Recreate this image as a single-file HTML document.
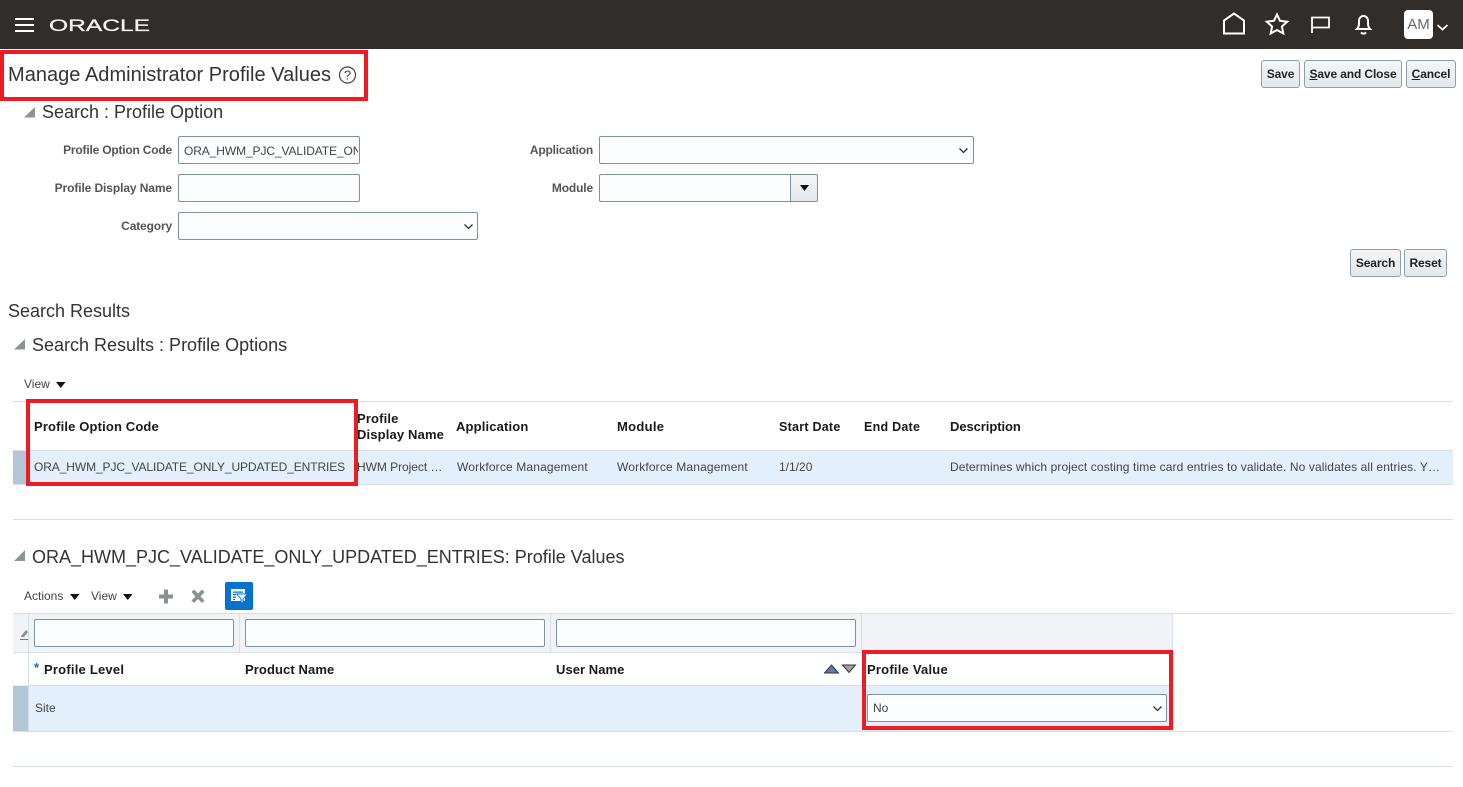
<!DOCTYPE html>
<html><head><meta charset="utf-8"><style>
html,body{margin:0;padding:0;background:#fff}
#p{position:relative;width:1463px;height:787px;overflow:hidden;font-family:"Liberation Sans",sans-serif;color:#333;background:#fff}
#p div,#p span.a,#p svg{position:absolute}
.t{position:absolute;white-space:nowrap;line-height:16px}
.h{font-size:18px;line-height:22px;color:#333}
.l{font-size:12px;font-weight:bold;color:#555;text-align:right;width:172px;left:0;letter-spacing:-.15px}
.th{font-size:13px;font-weight:bold;color:#1a1a1a;letter-spacing:.15px}
.c{font-size:12px;color:#444}
.i{box-sizing:border-box;border:1px solid #7d929f;border-radius:2px;background:#fcfdfe}
.b{box-sizing:border-box;border:1px solid #8ba0ad;border-radius:3px;background:linear-gradient(#f4f6f7,#e3e8eb);font-size:12px;font-weight:bold;color:#222;text-align:center;line-height:27px;white-space:nowrap;letter-spacing:-.12px}
.r{box-sizing:border-box;border:4.5px solid #ed1c24}
.hr{height:1px;background:#d6dfe6}
</style></head><body><div id="p">
<div style="left:0;top:0;width:1463px;height:49px;background:#312d2a"></div>
<div style="left:15px;top:18px;width:19px;height:2px;background:#fff"></div>
<div style="left:15px;top:24px;width:19px;height:2px;background:#fff"></div>
<div style="left:15px;top:30px;width:19px;height:2px;background:#fff"></div>
<svg style="left:49px;top:15px" width="102" height="20"><text x="0" y="16" font-family="Liberation Sans" font-size="17" fill="#f4f4f4" stroke="#f4f4f4" stroke-width=".3" textLength="101" lengthAdjust="spacingAndGlyphs">ORACLE</text></svg>
<svg style="left:1220px;top:10px" width="240" height="28" fill="none" stroke="#fff" stroke-width="2">
<path d="M4 23.500V10.500L14 3.500l10 7v13z"/>
<path d="M57 4.500l3 6.300 7.200.9-5.300 4.800 1.400 7-6.300-3.500-6.300 3.500 1.400-7-5.300-4.800 7.200-.9z"/>
<path d="M92 23V7.500h17v10H92" stroke-width="1.800"/>
<path d="M137 19c2-2 2-4 2-8 0-3 2-5 4.500-5s4.500 2 4.500 5c0 4 0 6 2 8zM141 22.500c1.500 1.500 3.500 1.500 5 0"/>
<path d="M217.500 15l5 4.500 5-4.500" stroke-width="1.800"/>
</svg>
<div style="left:1404px;top:10px;width:29px;height:29px;background:#fff;border-radius:4px;font-size:15px;line-height:29px;text-align:center;color:#666">AM</div>

<div class="t" style="left:8px;top:63px;font-size:20px;line-height:24px;color:#333;letter-spacing:.03px">Manage Administrator Profile Values</div>
<svg style="left:338px;top:66px" width="19" height="18"><circle cx="9.500" cy="9" r="8" fill="none" stroke="#444" stroke-width="1.200"/><text x="9.500" y="13.500" text-anchor="middle" font-family="Liberation Sans" font-size="13" fill="#444">?</text></svg>
<div class="r" style="left:0;top:50px;width:368px;height:51px"></div>

<div class="b" style="left:1261px;top:60px;width:39px;height:28px">Save</div>
<div class="b" style="left:1304px;top:60px;width:98px;height:28px"><u>S</u>ave and Close</div>
<div class="b" style="left:1406px;top:60px;width:50px;height:28px"><u>C</u>ancel</div>

<svg style="left:24px;top:107px" width="12" height="12"><path d="M0 10.500L11 0v10.500z" fill="#8e9397"/></svg>
<div class="t h" style="left:42px;top:101px">Search : Profile Option</div>

<div class="t l" style="top:142px;letter-spacing:-.2px">Profile Option Code</div>
<div class="i" style="left:178px;top:136px;width:182px;height:28px"></div>
<div class="t c" style="left:184px;top:143px;width:174px;overflow:hidden;letter-spacing:-.1px">ORA_HWM_PJC_VALIDATE_ONLY</div>
<div class="t l" style="top:180px;letter-spacing:-.1px">Profile Display Name</div>
<div class="i" style="left:178px;top:174px;width:182px;height:28px"></div>
<div class="t l" style="top:218px">Category</div>
<div class="i" style="left:178px;top:212px;width:300px;height:28px"></div>
<svg style="left:463px;top:223px" width="11" height="8"><path d="M1.500 1.500L5.500 5.500 9.500 1.500" fill="none" stroke="#333" stroke-width="1.300"/></svg>

<div class="t l" style="left:421px;top:142px;letter-spacing:-.2px">Application</div>
<div class="i" style="left:599px;top:136px;width:375px;height:28px"></div>
<svg style="left:958px;top:147px" width="11" height="8"><path d="M1.500 1.500L5.500 5.500 9.500 1.500" fill="none" stroke="#333" stroke-width="1.300"/></svg>
<div class="t l" style="left:421px;top:180px">Module</div>
<div class="i" style="left:599px;top:174px;width:219px;height:28px"></div>
<div style="box-sizing:border-box;left:790px;top:174px;width:28px;height:28px;border:1px solid #7d929f;border-radius:0 2px 2px 0;background:linear-gradient(#f4f6f7,#e3e8eb)"></div>
<svg style="left:799px;top:184px" width="11" height="8"><path d="M1 1h9L5.500 7z" fill="#111"/></svg>

<div class="b" style="left:1350px;top:249px;width:51px;height:28px;line-height:26px">Search</div>
<div class="b" style="left:1404px;top:249px;width:43px;height:28px;line-height:26px">Reset</div>

<div class="t h" style="left:8px;top:300px">Search Results</div>
<svg style="left:14px;top:339px" width="12" height="12"><path d="M0 10.500L11 0v10.500z" fill="#8e9397"/></svg>
<div class="t h" style="left:32px;top:334px">Search Results : Profile Options</div>

<div class="t c" style="left:24px;top:376px">View</div>
<svg style="left:56px;top:381px" width="10" height="8"><path d="M0 1h9.500L4.750 7z" fill="#111"/></svg>

<div class="hr" style="left:13px;top:401px;width:1440px"></div>
<div style="left:13px;top:450px;width:1440px;height:35px;background:#e3effb"></div>
<div style="left:13px;top:451px;width:15px;height:33px;background:#b3c6d6"></div>
<div class="hr" style="left:13px;top:450px;width:1440px"></div>
<div class="hr" style="left:13px;top:484px;width:1440px"></div>
<div class="hr" style="left:13px;top:519px;width:1440px"></div>

<div class="t th" style="left:34px;top:419px">Profile Option Code</div>
<div class="t th" style="left:357px;top:411px;line-height:16px">Profile<br>Display Name</div>
<div class="t th" style="left:456px;top:419px">Application</div>
<div class="t th" style="left:617px;top:419px;letter-spacing:.3px">Module</div>
<div class="t th" style="left:779px;top:419px;font-size:12.500px;letter-spacing:.25px">Start Date</div>
<div class="t th" style="left:864px;top:419px;font-size:12.500px;letter-spacing:.25px">End Date</div>
<div class="t th" style="left:950px;top:419px;letter-spacing:-.07px">Description</div>

<div class="t c" style="left:34px;top:459px;letter-spacing:-.1px">ORA_HWM_PJC_VALIDATE_ONLY_UPDATED_ENTRIES</div>
<div class="t c" style="left:357px;top:459px;letter-spacing:-.05px">HWM Project …</div>
<div class="t c" style="left:457px;top:459px;letter-spacing:.15px">Workforce Management</div>
<div class="t c" style="left:617px;top:459px;letter-spacing:.15px">Workforce Management</div>
<div class="t c" style="left:779px;top:459px">1/1/20</div>
<div class="t c" style="left:950px;top:459px;letter-spacing:.11px">Determines which project costing time card entries to validate. No validates all entries. Y…</div>
<div class="r" style="left:26px;top:399px;width:332px;height:87px"></div>

<svg style="left:14px;top:550px" width="12" height="12"><path d="M0 11L11 0v11z" fill="#8e9397"/></svg>
<div class="t h" style="left:32px;top:546px">ORA_HWM_PJC_VALIDATE_ONLY_UPDATED_ENTRIES: Profile Values</div>

<div class="t c" style="left:24px;top:588px">Actions</div>
<svg style="left:70px;top:593px" width="10" height="8"><path d="M0 1h9.500L4.750 7z" fill="#111"/></svg>
<div class="t c" style="left:91px;top:588px">View</div>
<svg style="left:123px;top:593px" width="10" height="8"><path d="M0 1h9.500L4.750 7z" fill="#111"/></svg>
<svg style="left:158px;top:588px" width="16" height="17"><path d="M6 1.500h4v5h5v4h-5v5H6v-5H1v-4h5z" fill="#8a9095"/></svg>
<svg style="left:190px;top:588px" width="16" height="17"><path d="M1.500 4L4 1.500l4 4 4-4L14.500 4l-4 4.500 4 4-2.500 2.500-4-4-4 4L1.500 12.500l4-4z" fill="#8a9095"/></svg>
<div style="left:225px;top:582px;width:28px;height:28px;background:#0572ce;border-radius:2px"></div>
<svg style="left:225px;top:582px" width="28" height="28"><path d="M6 7h14v12H6z" fill="#fff"/><path d="M8 9.500h10v1.300H8zM8 12h3v1.300H8zM8 14.500h3v1.300H8zM8 17h2v1H8z" fill="#0572ce"/><path d="M10.500 11.500h13l-5 5.500v5.500l-3-1.500v-4z" fill="#0572ce"/><path d="M12.500 12.500h9l-4 4.300v3.700l-1-.6v-3.100z" fill="#fff"/></svg>

<div style="left:13px;top:614px;width:1160px;height:38px;background:#f1f3f7"></div>
<div class="hr" style="left:13px;top:613px;width:1440px"></div>
<div class="hr" style="left:13px;top:652px;width:1160px"></div>
<svg style="left:19px;top:626px" width="11" height="15"><path d="M2 10l5-6 2 2-4 5H2z" fill="#8e9397"/><path d="M1 13.500h8" stroke="#777" stroke-width="1"/></svg>
<div class="hr" style="left:28px;top:614px;width:1px;height:71px"></div>
<div class="hr" style="left:239px;top:614px;width:1px;height:38px"></div>
<div class="hr" style="left:550px;top:614px;width:1px;height:38px"></div>
<div class="hr" style="left:861px;top:614px;width:1px;height:38px"></div>
<div class="hr" style="left:1172px;top:614px;width:1px;height:38px"></div>
<div class="i" style="left:34px;top:619px;width:200px;height:28px"></div>
<div class="i" style="left:245px;top:619px;width:300px;height:28px"></div>
<div class="i" style="left:556px;top:619px;width:300px;height:28px"></div>

<div class="t" style="left:34px;top:660px;font-size:13px;font-weight:bold;color:#0572ce">*</div>
<div class="t th" style="left:44px;top:662px;letter-spacing:.22px">Profile Level</div>
<div class="t th" style="left:245px;top:662px;letter-spacing:.1px">Product Name</div>
<div class="t th" style="left:556px;top:662px;letter-spacing:.05px">User Name</div>
<svg style="left:824px;top:663px" width="34" height="12"><path d="M.5 10L7.500 2 14.500 10z" fill="#5a7bb5" stroke="#333" stroke-width="1"/><path d="M18.500 2h13l-6.500 7.500z" fill="#a0a4a8" stroke="#333" stroke-width="1"/></svg>
<div class="t th" style="left:867px;top:662px;letter-spacing:.22px">Profile Value</div>

<div style="left:13px;top:685px;width:1160px;height:46px;background:#e3effb"></div>
<div style="left:13px;top:686px;width:15px;height:45px;background:#b3c6d6"></div>
<div class="hr" style="left:28px;top:685px;width:1145px"></div>
<div class="hr" style="left:13px;top:731px;width:1440px"></div>
<div class="hr" style="left:28px;top:686px;width:1px;height:45px"></div>
<div class="t c" style="left:35px;top:700px">Site</div>
<div class="i" style="left:867px;top:694px;width:300px;height:28px"></div>
<div class="t c" style="left:873px;top:700px">No</div>
<svg style="left:1152px;top:705px" width="11" height="8"><path d="M1.500 1.500L5.500 5.500 9.500 1.500" fill="none" stroke="#333" stroke-width="1.300"/></svg>
<div class="r" style="left:862px;top:650px;width:311px;height:80px"></div>
<div class="hr" style="left:13px;top:766px;width:1440px"></div>
</div></body></html>
